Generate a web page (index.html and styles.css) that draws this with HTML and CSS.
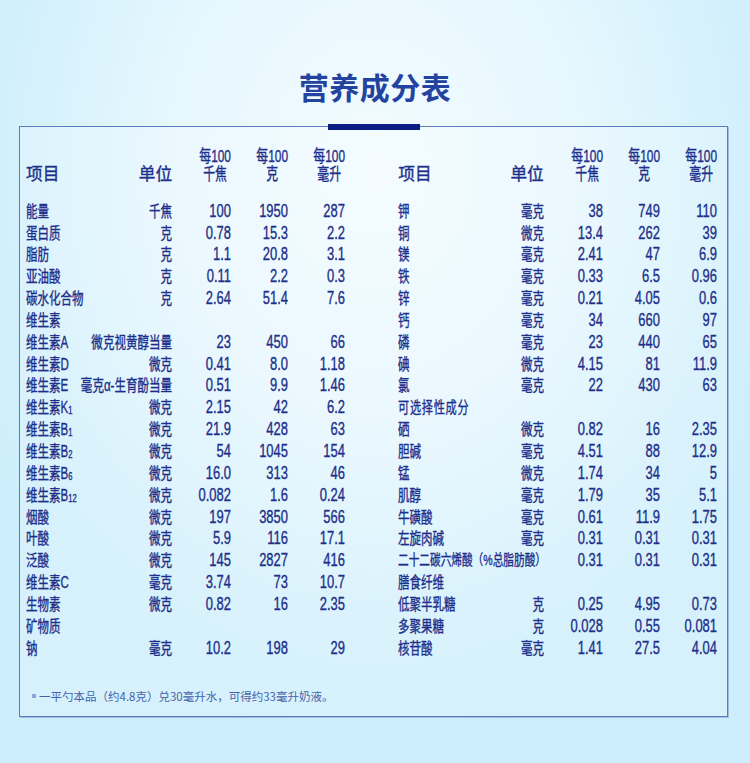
FILE: index.html
```html
<!DOCTYPE html>
<html lang="zh">
<head>
<meta charset="utf-8">
<title>营养成分表</title>
<link rel="stylesheet" href="styles.css">
</head>
<body>
<main class="page">
  <h1 class="title">营养成分表</h1>
  <div class="bar"></div>
  <section class="panel">
    <div class="tables">
      <div class="tbl">
        <div class="thead">
          <div class="hnm"><span class="lab l">项目</span><span class="lab r">单位</span></div>
          <div class="hv"><span>每100<br>千焦</span></div>
          <div class="hv"><span>每100<br>克</span></div>
          <div class="hv"><span>每100<br>毫升</span></div>
        </div>
        <div class="tbody">
          <div class="nm"><span>能量</span><span>千焦</span></div><div class="v">100</div><div class="v">1950</div><div class="v">287</div>
          <div class="nm"><span>蛋白质</span><span>克</span></div><div class="v">0.78</div><div class="v">15.3</div><div class="v">2.2</div>
          <div class="nm"><span>脂肪</span><span>克</span></div><div class="v">1.1</div><div class="v">20.8</div><div class="v">3.1</div>
          <div class="nm"><span>亚油酸</span><span>克</span></div><div class="v">0.11</div><div class="v">2.2</div><div class="v">0.3</div>
          <div class="nm"><span>碳水化合物</span><span>克</span></div><div class="v">2.64</div><div class="v">51.4</div><div class="v">7.6</div>
          <div class="nm"><span>维生素</span></div><div class="v"></div><div class="v"></div><div class="v"></div>
          <div class="nm"><span>维生素A</span><span>微克视黄醇当量</span></div><div class="v">23</div><div class="v">450</div><div class="v">66</div>
          <div class="nm"><span>维生素D</span><span>微克</span></div><div class="v">0.41</div><div class="v">8.0</div><div class="v">1.18</div>
          <div class="nm"><span>维生素E</span><span>毫克α-生育酚当量</span></div><div class="v">0.51</div><div class="v">9.9</div><div class="v">1.46</div>
          <div class="nm"><span>维生素K<span class="sb">1</span></span><span>微克</span></div><div class="v">2.15</div><div class="v">42</div><div class="v">6.2</div>
          <div class="nm"><span>维生素B<span class="sb">1</span></span><span>微克</span></div><div class="v">21.9</div><div class="v">428</div><div class="v">63</div>
          <div class="nm"><span>维生素B<span class="sb">2</span></span><span>微克</span></div><div class="v">54</div><div class="v">1045</div><div class="v">154</div>
          <div class="nm"><span>维生素B<span class="sb">6</span></span><span>微克</span></div><div class="v">16.0</div><div class="v">313</div><div class="v">46</div>
          <div class="nm"><span>维生素B<span class="sb">12</span></span><span>微克</span></div><div class="v">0.082</div><div class="v">1.6</div><div class="v">0.24</div>
          <div class="nm"><span>烟酸</span><span>微克</span></div><div class="v">197</div><div class="v">3850</div><div class="v">566</div>
          <div class="nm"><span>叶酸</span><span>微克</span></div><div class="v">5.9</div><div class="v">116</div><div class="v">17.1</div>
          <div class="nm"><span>泛酸</span><span>微克</span></div><div class="v">145</div><div class="v">2827</div><div class="v">416</div>
          <div class="nm"><span>维生素C</span><span>毫克</span></div><div class="v">3.74</div><div class="v">73</div><div class="v">10.7</div>
          <div class="nm"><span>生物素</span><span>微克</span></div><div class="v">0.82</div><div class="v">16</div><div class="v">2.35</div>
          <div class="nm"><span>矿物质</span></div><div class="v"></div><div class="v"></div><div class="v"></div>
          <div class="nm"><span>钠</span><span>毫克</span></div><div class="v">10.2</div><div class="v">198</div><div class="v">29</div>
        </div>
      </div>
      <div class="tbl">
        <div class="thead">
          <div class="hnm"><span class="lab l">项目</span><span class="lab r">单位</span></div>
          <div class="hv"><span>每100<br>千焦</span></div>
          <div class="hv"><span>每100<br>克</span></div>
          <div class="hv"><span>每100<br>毫升</span></div>
        </div>
        <div class="tbody">
          <div class="nm"><span>钾</span><span>毫克</span></div><div class="v">38</div><div class="v">749</div><div class="v">110</div>
          <div class="nm"><span>铜</span><span>微克</span></div><div class="v">13.4</div><div class="v">262</div><div class="v">39</div>
          <div class="nm"><span>镁</span><span>毫克</span></div><div class="v">2.41</div><div class="v">47</div><div class="v">6.9</div>
          <div class="nm"><span>铁</span><span>毫克</span></div><div class="v">0.33</div><div class="v">6.5</div><div class="v">0.96</div>
          <div class="nm"><span>锌</span><span>毫克</span></div><div class="v">0.21</div><div class="v">4.05</div><div class="v">0.6</div>
          <div class="nm"><span>钙</span><span>毫克</span></div><div class="v">34</div><div class="v">660</div><div class="v">97</div>
          <div class="nm"><span>磷</span><span>毫克</span></div><div class="v">23</div><div class="v">440</div><div class="v">65</div>
          <div class="nm"><span>碘</span><span>微克</span></div><div class="v">4.15</div><div class="v">81</div><div class="v">11.9</div>
          <div class="nm"><span>氯</span><span>毫克</span></div><div class="v">22</div><div class="v">430</div><div class="v">63</div>
          <div class="nm"><span class="wide">可选择性成分</span></div><div class="v"></div><div class="v"></div><div class="v"></div>
          <div class="nm"><span>硒</span><span>微克</span></div><div class="v">0.82</div><div class="v">16</div><div class="v">2.35</div>
          <div class="nm"><span>胆碱</span><span>毫克</span></div><div class="v">4.51</div><div class="v">88</div><div class="v">12.9</div>
          <div class="nm"><span>锰</span><span>微克</span></div><div class="v">1.74</div><div class="v">34</div><div class="v">5</div>
          <div class="nm"><span>肌醇</span><span>毫克</span></div><div class="v">1.79</div><div class="v">35</div><div class="v">5.1</div>
          <div class="nm"><span>牛磺酸</span><span>毫克</span></div><div class="v">0.61</div><div class="v">11.9</div><div class="v">1.75</div>
          <div class="nm"><span>左旋肉碱</span><span>毫克</span></div><div class="v">0.31</div><div class="v">0.31</div><div class="v">0.31</div>
          <div class="nm"><span class="long">二十二碳六烯酸（%总脂肪酸）</span></div><div class="v">0.31</div><div class="v">0.31</div><div class="v">0.31</div>
          <div class="nm"><span>膳食纤维</span></div><div class="v"></div><div class="v"></div><div class="v"></div>
          <div class="nm"><span>低聚半乳糖</span><span>克</span></div><div class="v">0.25</div><div class="v">4.95</div><div class="v">0.73</div>
          <div class="nm"><span>多聚果糖</span><span>克</span></div><div class="v">0.028</div><div class="v">0.55</div><div class="v">0.081</div>
          <div class="nm"><span>核苷酸</span><span>毫克</span></div><div class="v">1.41</div><div class="v">27.5</div><div class="v">4.04</div>
        </div>
      </div>
    </div>
    <p class="note"><span class="dot"></span>一平勺本品（约4.8克）兑30毫升水，可得约33毫升奶液。</p>
  </section>
</main>
</body>
</html>
```

FILE: styles.css
```css
* { box-sizing: border-box; }
html, body { margin: 0; padding: 0; }
body {
  width: 750px;
  height: 763px;
  overflow: hidden;
  font-family: "Liberation Sans", "Noto Sans CJK SC", sans-serif;
  color: #1d2f8a;
  background:
    radial-gradient(ellipse 62% 75% at 50% 22%, #f2fbff 0%, #e6f7fe 45%, #d2f0fc 80%, #cdeefc 100%);
}
.page {
  padding-top: 68px;
}
.title {
  margin: 0 0 20px;
  text-align: center;
  font-family: "Noto Sans CJK SC", sans-serif;
  font-weight: 700;
  font-size: 30px;
  line-height: 36px;
  color: #2443a0;
  letter-spacing: 0.5px;
}
.bar {
  position: relative;
  z-index: 1;
  width: 92px;
  height: 6px;
  margin-left: 328px;
  background: #0b1f82;
}
.panel {
  margin: -4px 0 0 19px;
  width: 709px;
  height: 591px;
  border: 1px solid #5a7cbf;
  box-shadow: 1px 1px 0 #a4bbe0;
  background: rgba(255, 255, 255, 0.18);
  padding: 20px 0 0 6px;
  overflow-x: clip;
}
.tables {
  display: flex;
  gap: 73.6px;
  width: 959.8px;
  transform: scaleX(0.72);
  transform-origin: 0 0;
  -webkit-text-stroke: 0.35px #1d2f8a;
}
.tbl {
  width: 443.1px;
  flex: none;
}
.thead,
.tbody {
  display: grid;
  grid-template-columns: 202.8px 81.9px 79.2px 79.2px;
}
.thead {
  height: 36px;
}
.tbody {
  margin-top: 17.7px;
  grid-auto-rows: 21.85px;
}
.hnm {
  display: flex;
  justify-content: space-between;
  align-items: flex-end;
  font-size: 17px;
  line-height: 20px;
  font-family: "Noto Sans CJK SC", sans-serif;
}
.lab {
  display: inline-block;
  transform: scaleX(1.36);
}
.lab.l { transform-origin: 0 50%; }
.lab.r { transform-origin: 100% 50%; }
.hv {
  text-align: right;
  font-size: 16.5px;
  line-height: 18px;
}
.hv span {
  display: inline-block;
  text-align: center;
}
.nm {
  display: flex;
  justify-content: space-between;
  font-size: 16px;
  line-height: 21.85px;
  white-space: nowrap;
}
.nm .sb {
  font-size: 10.5px;
  vertical-align: -1px;
}
.nm .wide {
  letter-spacing: 1px;
  font-size: 15.5px;
}
.nm .long {
  font-size: 14.8px;
}
.v {
  text-align: right;
  font-size: 18px;
  line-height: 21.85px;
  white-space: nowrap;
}
.note {
  margin: 29px 0 0 6px;
  font-family: "Noto Sans CJK SC", sans-serif;
  font-size: 11.5px;
  line-height: 16px;
  color: #4762aa;
  display: flex;
  align-items: center;
  gap: 2px;
}
.dot {
  width: 4px;
  height: 4px;
  background: #8fa8da;
  margin-right: 1px;
}
```
